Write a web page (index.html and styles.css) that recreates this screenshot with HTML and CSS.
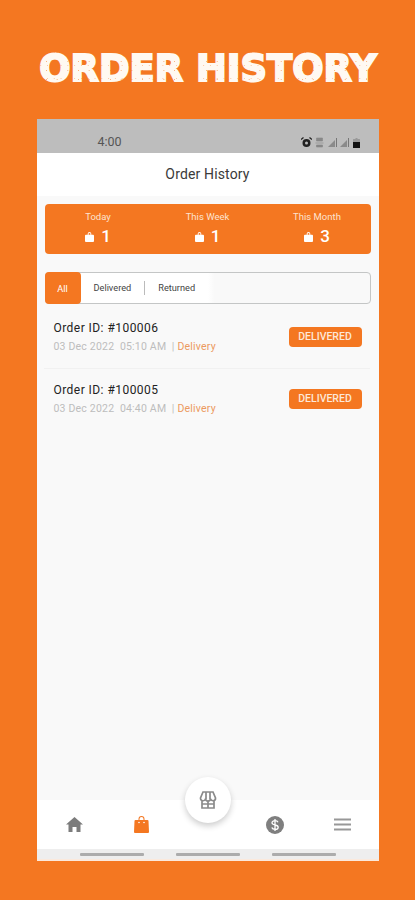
FILE: index.html
```html
<!DOCTYPE html>
<html lang="en">
<head>
<meta charset="utf-8">
<title>Order History</title>
<link rel="stylesheet" href="styles.css">
</head>
<body>
<h1 class="hero"><span class="hero-text">ORDER HISTORY</span></h1>
<main class="phone">
  <div class="status">
    <span class="time">4:00</span>
    <div class="status-icons">
      <svg width="11" height="11" viewBox="0 0 11 11"><circle cx="5.500" cy="6" r="4" fill="#222"/><circle cx="5.500" cy="6" r="1.500" fill="#bbb"/><path d="M0 2.500 2.500 .5M11 2.500 8.500 .5" stroke="#222" stroke-width="1.300"/></svg>
      <svg width="9" height="11" viewBox="0 0 9 11"><path d="M1.500 1h6v3h-6zM.5 6h8M1.500 8h6v2h-6z" fill="#888" stroke="#888" stroke-width=".6"/></svg>
      <svg width="9" height="9" viewBox="0 0 9 9"><path d="M0 9 7 2v7z" fill="#8a8a8a"/><path d="M8 0h1v9H8z" fill="#777"/></svg>
      <svg width="9" height="9" viewBox="0 0 9 9"><path d="M0 9 7 2v7z" fill="#8a8a8a"/><path d="M8 0h1v9H8z" fill="#777"/></svg>
      <svg width="7" height="10" viewBox="0 0 7 10"><path d="M2.500 0h2v1H6.500a.5.5 0 0 1 .5.5V10H0V1.500A.5.5 0 0 1 .5 1h2z" fill="#999"/><path d="M0 4h7v6H0z" fill="#111"/></svg>
    </div>
  </div>
  <header class="title">Order History</header>
  <div class="content">
    <section class="summary">
      <div class="stat">
        <span class="stat-label">Today</span>
        <span class="stat-value"><svg class="mini-bag" viewBox="0 0 10 11"><path d="M3 3V2a2 2 0 0 1 4 0v1h2a1 1 0 0 1 1 1v6a1 1 0 0 1-1 1H1a1 1 0 0 1-1-1V4a1 1 0 0 1 1-1zm1 0h2V2a1 1 0 0 0-2 0z" fill="#fff"/></svg>1</span>
      </div>
      <div class="stat">
        <span class="stat-label">This Week</span>
        <span class="stat-value"><svg class="mini-bag" viewBox="0 0 10 11"><path d="M3 3V2a2 2 0 0 1 4 0v1h2a1 1 0 0 1 1 1v6a1 1 0 0 1-1 1H1a1 1 0 0 1-1-1V4a1 1 0 0 1 1-1zm1 0h2V2a1 1 0 0 0-2 0z" fill="#fff"/></svg>1</span>
      </div>
      <div class="stat">
        <span class="stat-label">This Month</span>
        <span class="stat-value"><svg class="mini-bag" viewBox="0 0 10 11"><path d="M3 3V2a2 2 0 0 1 4 0v1h2a1 1 0 0 1 1 1v6a1 1 0 0 1-1 1H1a1 1 0 0 1-1-1V4a1 1 0 0 1 1-1zm1 0h2V2a1 1 0 0 0-2 0z" fill="#fff"/></svg>3</span>
      </div>
    </section>
    <nav class="tabs">
      <span class="tab-all">All</span>
      <div class="tab-rest">
        <span class="tab tab-first">Delivered</span>
        <span class="tab">Returned</span>
      </div>
    </nav>
    <ul class="orders">
      <li class="order">
        <div class="order-main">
          <div class="order-id">Order ID: #100006</div>
          <div class="order-meta">03 Dec 2022&nbsp; 05:10 AM&nbsp; | <span class="order-type">Delivery</span></div>
        </div>
        <span class="badge">DELIVERED</span>
      </li>
      <li class="order">
        <div class="order-main">
          <div class="order-id">Order ID: #100005</div>
          <div class="order-meta">03 Dec 2022&nbsp; 04:40 AM&nbsp; | <span class="order-type">Delivery</span></div>
        </div>
        <span class="badge">DELIVERED</span>
      </li>
    </ul>
  </div>
  <footer class="bottom">
    <button class="fab" aria-label="Store">
      <svg width="18" height="18" viewBox="0 0 18 18" fill="none" stroke="#8a8a8a" stroke-width="1.700"><path d="M4 1h10l2.500 6a2.300 2.300 0 0 1-5 .5 2.500 2.500 0 0 1-5 0 2.300 2.300 0 0 1-5-.5zM7 1v7M11 1v7M3 10v7h12v-7M3 13h12M9 10v7"/></svg>
    </button>
    <div class="nav">
      <svg class="nav-icon" width="17" height="15" viewBox="0 0 17 15"><path d="M8.500 0 17 7.500h-2.500V15H10.500V10h-4v5H2.500V7.500H0z" fill="#7c7c7c"/></svg>
      <svg class="nav-icon" width="15" height="17" viewBox="0 0 15 17"><path d="M4.500 4V3a3 3 0 0 1 6 0v1h3a1 1 0 0 1 1 1l.5 11a1 1 0 0 1-1 1H1a1 1 0 0 1-1-1L.5 5a1 1 0 0 1 1-1zm1 0h4V3a2 2 0 0 0-4 0z" fill="#f47721"/><circle cx="5" cy="6.500" r=".8" fill="#fff"/><circle cx="10" cy="6.500" r=".8" fill="#fff"/></svg>
      <span class="nav-gap"></span>
      <svg class="nav-icon" width="18" height="18" viewBox="0 0 18 18"><circle cx="9" cy="9" r="9" fill="#7f7f7f"/><path d="M12 6.200C11.500 5 10.300 4.600 9 4.600c-1.600 0-3 .8-3 2.200 0 3 6.200 1.400 6.200 4.400 0 1.400-1.500 2.200-3.200 2.200-1.500 0-2.700-.6-3.200-1.900M9 3v12" fill="none" stroke="#fff" stroke-width="1.300"/></svg>
      <svg class="nav-icon" width="17" height="13" viewBox="0 0 17 13"><path d="M0 1.500h17M0 6.500h17M0 11.500h17" stroke="#989898" stroke-width="2"/></svg>
    </div>
    <div class="gesture">
      <span class="gesture-bar"></span>
      <span class="gesture-bar"></span>
      <span class="gesture-bar"></span>
    </div>
  </footer>
</main>
</body>
</html>
```
FILE: styles.css
```css
* { box-sizing: border-box; }
html, body { margin: 0; padding: 0; }
body {
  width: 415px;
  height: 900px;
  overflow: hidden;
  background: #f47721;
  font-family: Roboto, "Liberation Sans", sans-serif;
  display: flex;
  flex-direction: column;
  align-items: center;
}
.hero {
  margin: 0;
  height: 119px;
  padding-top: 45px;
  font-family: "DejaVu Sans", sans-serif;
  font-weight: 700;
  font-size: 38px;
  line-height: 47px;
  white-space: nowrap;
  color: #fff9f2;
  -webkit-text-stroke: 2px #fff9f2;
}
.hero-text {
  position: relative;
  display: inline-block;
  transform: scaleX(.97);
}
/* speckles over the letters; they are the page colour, so only show on the white */
.hero-text::after {
  content: "";
  position: absolute;
  inset: 0;
  background-image:
    radial-gradient(circle, rgba(244,119,33,.55) .7px, transparent 1px),
    radial-gradient(circle, rgba(244,119,33,.4) .6px, transparent 1px);
  background-size: 11px 9px, 7px 13px;
  background-position: 2px 3px, 5px 1px;
}
.phone {
  width: 342px;
  height: 742px;
  display: flex;
  flex-direction: column;
  background: #f9f9f9;
  border-bottom: 2px solid #fbe9dc;
}
.status {
  height: 34px;
  flex: none;
  background: #bdbdbd;
  display: flex;
  justify-content: space-between;
  align-items: flex-end;
  padding: 0 19px 4px 61px;
}
.time { font-size: 12.500px; line-height: 15px; color: #555; }
.status-icons { display: flex; align-items: center; gap: 3.500px; margin-bottom: 1px; }
.title {
  height: 43px;
  flex: none;
  background: #fff;
  text-align: center;
  font-size: 14px;
  letter-spacing: .15px;
  line-height: 43px;
  color: #3a3a3a;
}
.content { flex: 1; padding: 8px 8px 0; min-height: 0; }
.summary {
  height: 50px;
  background: #f47721;
  border-radius: 4px;
  display: grid;
  grid-template-columns: 107px 1fr 107px;
  color: #fff;
  text-align: center;
  padding-top: 7px;
}
.stat { display: flex; flex-direction: column; align-items: center; }
.stat-label { font-size: 9.500px; line-height: 12px; color: #fde3d0; }
.stat-value {
  display: flex;
  align-items: center;
  gap: 7px;
  font-size: 17px;
  font-weight: 500;
  line-height: 21px;
  margin-top: 3px;
}
.mini-bag { width: 9px; height: 10px; }
.tabs {
  margin-top: 18px;
  height: 32px;
  width: 326px;
  border: 1px solid #c4c6c6;
  border-radius: 4px;
  background: linear-gradient(90deg, #fff 0, #fff 50%, #f9f9f9 52%);
  display: flex;
  align-items: center;
  font-size: 9.200px;
}
.tab-all {
  width: 36px;
  height: 32px;
  margin-left: -1px;
  background: #f47721;
  color: #fff;
  border-radius: 4px;
  display: flex;
  align-items: center;
  justify-content: center;
}
.tab-rest { display: flex; align-items: center; padding-left: 13px; color: #444; }
.tab { padding-left: 13px; line-height: 14px; }
.tab-first { padding: 0 13px 0 0; border-right: 1px solid #bbb; }
.orders { list-style: none; margin: 0 0 0 -1px; padding: 3px 0 0; width: 326px; }
.order {
  height: 62px;
  display: flex;
  justify-content: space-between;
  padding: 13px 8px 0 9px;
  border-bottom: 1px solid #f1f1f1;
}
.order:last-child { border-bottom: none; }
.order-main { padding-left: 1px; }
.order-id { font-size: 12px; line-height: 16px; color: #222; letter-spacing: .45px; }
.order-meta { margin-top: 3.500px; font-size: 10.500px; line-height: 14px; color: #bdbdbd; letter-spacing: .2px; white-space: nowrap; }
.order-type { color: #ec9a5f; }
.badge {
  margin-top: 7px;
  width: 73px;
  height: 20px;
  background: #f47721;
  border-radius: 4px;
  color: #fde8d8;
  font-size: 10.500px;
  font-weight: 500;
  line-height: 20px;
  text-align: center;
}
.bottom {
  position: relative;
  flex: none;
  background: #fff;
  height: 59px;
}
.fab {
  position: absolute;
  left: 148px;
  top: -23px;
  width: 46px;
  height: 46px;
  padding: 0;
  border: none;
  border-radius: 50%;
  background: #fff;
  box-shadow: 0 3px 6px rgba(0,0,0,.2);
  display: flex;
  align-items: center;
  justify-content: center;
}
.nav {
  height: 49px;
  display: grid;
  grid-template-columns: repeat(5, 67px);
  justify-items: center;
  align-items: center;
  padding: 0 3px 0 4px;
}
.gesture {
  height: 10px;
  background: #eeeeee;
  display: flex;
  justify-content: center;
  gap: 32px;
  padding-top: 4px;
}
.gesture-bar { width: 64px; height: 2.500px; background: #acacac; border-radius: 1px; }
```
